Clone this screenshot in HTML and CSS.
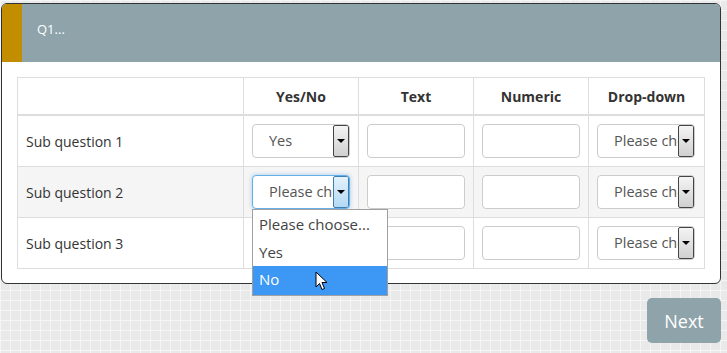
FILE: index.html
```html
<!DOCTYPE html>
<html lang="en">
<head>
  <meta charset="UTF-8" />
  <title>Q1</title>
  <link rel="stylesheet" href="styles.css">
</head>
<body>

<div class="page">
  <div class="card">
    <div class="card-head">
      <div class="marker"></div>
      <div class="title">Q1...</div>
    </div>

    <div class="card-body">
      <table class="grid">
        <thead>
          <tr>
            <th class="col-label"></th>
            <th class="col-yn">Yes/No</th>
            <th class="col-text">Text</th>
            <th class="col-num">Numeric</th>
            <th class="col-dd">Drop-down</th>
          </tr>
        </thead>
        <tbody>
          <tr>
            <td class="label">Sub question 1</td>
            <td><div class="select"><span class="value">Yes</span><span class="arrow"></span></div></td>
            <td><div class="input"></div></td>
            <td><div class="input"></div></td>
            <td><div class="select"><span class="value">Please choose...</span><span class="arrow"></span></div></td>
          </tr>
          <tr class="striped">
            <td class="label">Sub question 2</td>
            <td class="open-cell">
              <div class="select focused"><span class="value">Please choose...</span><span class="arrow"></span></div>
              <ul class="options">
                <li>Please choose...</li>
                <li>Yes</li>
                <li class="active">No
                  <svg class="cursor" width="13" height="20" viewBox="0 0 13 20">
                    <path d="M1 1 L1 16 L4.5 12.5 L7 18.5 L9.5 17.5 L7 11.5 L12 11.5 Z" fill="#fff" stroke="#000" stroke-width="1" stroke-linejoin="round"/>
                  </svg>
                </li>
              </ul>
            </td>
            <td><div class="input"></div></td>
            <td><div class="input"></div></td>
            <td><div class="select"><span class="value">Please choose...</span><span class="arrow"></span></div></td>
          </tr>
          <tr>
            <td class="label">Sub question 3</td>
            <td><div class="select"><span class="value">Please choose...</span><span class="arrow"></span></div></td>
            <td><div class="input"></div></td>
            <td><div class="input"></div></td>
            <td><div class="select"><span class="value">Please choose...</span><span class="arrow"></span></div></td>
          </tr>
        </tbody>
      </table>
    </div>
  </div>

  <div class="actions">
    <button class="next">Next</button>
  </div>
</div>

</body>
</html>
```

FILE: styles.css
```css
body {
  margin: 0;
  font-family: 'Open Sans', sans-serif;
  color: #333;
  background-color: #e9e9e9;
  background-image:
    linear-gradient(to right, #f5f5f5 1px, transparent 1px),
    linear-gradient(to bottom, #f5f5f5 1px, transparent 1px);
  background-size: 10px 10px;
  height: 353px;
  overflow: hidden;
}

.page {
  padding: 3px 6px 0 1px;
}

.card {
  background: #fff;
  border: 1px solid #2f3436;
  border-radius: 6px;
}

.card-head {
  display: flex;
  height: 58px;
  background: #8fa3ab;
  border-radius: 5px 5px 0 0;
  overflow: hidden;
}

.marker {
  width: 20px;
  background: #c28e00;
}

.title {
  color: #fff;
  font-size: 13px;
  padding: 16px 0 0 15px;
}

.card-body {
  padding: 15px 15px 14px 15px;
}

.grid {
  width: 688px;
  border-collapse: collapse;
  table-layout: fixed;
  font-size: 14px;
}

.grid th,
.grid td {
  border: 1px solid #ddd;
}

.grid th {
  height: 36px;
  font-weight: 700;
  text-align: center;
  border-bottom: 2px solid #ddd;
  padding: 0;
}

.col-label { width: 225px; }
.col-yn { width: 114px; }
.col-text { width: 114px; }
.col-num { width: 114px; }

.grid td {
  height: 34px;
  padding: 8px;
}

.striped td {
  background: #f5f5f5;
}

.input {
  height: 32px;
  border: 1px solid #ccc;
  border-radius: 4px;
  background: #fff;
}

.select {
  position: relative;
  width: 96px;
  height: 32px;
  border: 1px solid #ccc;
  border-radius: 4px;
  background: #fff;
  overflow: hidden;
}

.select .value {
  position: absolute;
  left: 16px;
  top: 6px;
  white-space: nowrap;
  font-size: 14.5px;
  color: #555;
}

.select .arrow {
  position: absolute;
  top: 0;
  right: 0;
  width: 14px;
  height: 30px;
  border: 1px solid #444;
  border-radius: 2px;
  background: linear-gradient(#f4f4f4, #d0d0d0);
}

.select .arrow::after {
  content: "";
  position: absolute;
  left: 3px;
  top: 13px;
  border-left: 4px solid transparent;
  border-right: 4px solid transparent;
  border-top: 4px solid #000;
}

.select.focused {
  border-color: #66afe9;
  box-shadow: 0 0 4px rgba(102, 175, 233, 0.6);
}

.select.focused .arrow {
  border-color: #3c7fb1;
  background: linear-gradient(#e3f2fc, #b3d9f4);
}

.open-cell {
  position: relative;
}

.options {
  position: absolute;
  left: 8px;
  top: 42px;
  z-index: 5;
  margin: 0;
  padding: 0;
  list-style: none;
  width: 134px;
  background: #fff;
  border: 1px solid #a0a0a0;
  font-size: 15px;
  color: #444;
}

.options li {
  position: relative;
  height: 28px;
  line-height: 28px;
  padding-left: 6px;
}

.options li.active {
  height: 29px;
  line-height: 27px;
  background: #3d97f4;
  color: #fff;
}

.cursor {
  position: absolute;
  left: 62px;
  top: 5px;
}

.actions {
  display: flex;
  justify-content: flex-end;
  padding-top: 14px;
}

.next {
  width: 74px;
  height: 45px;
  border: none;
  border-radius: 5px;
  background: #8fa3ab;
  color: #fff;
  font-family: 'Open Sans', sans-serif;
  font-size: 18px;
  cursor: pointer;
}
```
